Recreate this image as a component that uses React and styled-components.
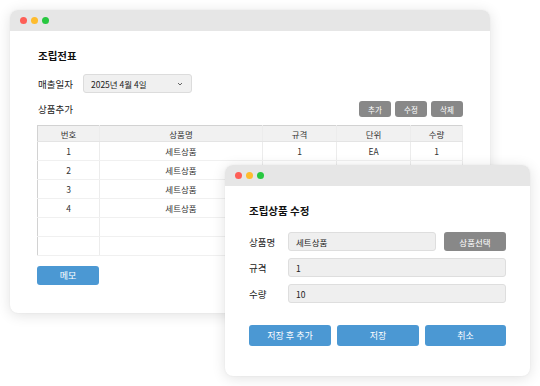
import styled, { createGlobalStyle } from "styled-components";

const GlobalStyle = createGlobalStyle`
  html, body {
    margin: 0;
    padding: 0;
    background: #fff;
  }
  body {
    font-family: "Noto Sans CJK KR", "Noto Sans", sans-serif;
    color: #222;
  }
`;

const Desktop = styled.div`
  position: relative;
  width: 540px;
  height: 386px;
  overflow: hidden;
  background: #fff;
`;

const Window = styled.div`
  position: absolute;
  left: ${(p) => p.x}px;
  top: ${(p) => p.y}px;
  width: ${(p) => p.w}px;
  height: ${(p) => p.h}px;
  background: #fff;
  border-radius: 8px;
  overflow: hidden;
  box-shadow: 0 2px 14px rgba(0, 0, 0, 0.12), 0 0 2px rgba(0, 0, 0, 0.06);
  display: flex;
  flex-direction: column;
`;

const TitleBar = styled.div`
  height: 21px;
  flex: none;
  background: #e6e6e6;
  display: flex;
  align-items: center;
  gap: 4px;
  padding-left: 10px;
`;

const Dot = styled.span`
  width: 7px;
  height: 7px;
  border-radius: 50%;
  background: ${(p) => p.color};
`;

const Body = styled.div`
  padding: ${(p) => p.pad};
  display: flex;
  flex-direction: column;
`;

const Title = styled.h1`
  margin: 0;
  font-size: 10.5px;
  font-weight: 700;
  line-height: 16px;
  color: #111;
`;

const DateRow = styled.div`
  display: flex;
  align-items: center;
  gap: 10px;
  margin-top: 10px;
`;

const Label = styled.span`
  font-size: 9.5px;
  color: #222;
  width: ${(p) => (p.w ? `${p.w}px` : "auto")};
  flex: none;
`;

const Select = styled.div`
  width: 109px;
  height: 19px;
  box-sizing: border-box;
  background: #f0f0f0;
  border: 1px solid #dcdcdc;
  border-radius: 3px;
  display: flex;
  align-items: center;
  justify-content: space-between;
  padding: 0 8px 0 7px;
  font-size: 8.5px;
  color: #222;
`;

const SectionRow = styled.div`
  display: flex;
  align-items: center;
  justify-content: space-between;
  margin-top: 8px;
  width: 425px;
`;

const ButtonGroup = styled.div`
  display: flex;
  gap: 4px;
`;

const GrayButton = styled.button`
  width: ${(p) => p.w || 32}px;
  height: ${(p) => p.h || 16}px;
  border: 0;
  border-radius: 3px;
  background: #888;
  color: #fff;
  font-family: inherit;
  font-size: ${(p) => p.fs || 7.5}px;
  padding: 0;
  flex: none;
`;

const Table = styled.table`
  margin-top: 8px;
  margin-left: -1px;
  width: 426px;
  border-collapse: collapse;
  border: 1px solid #d2d2d2;
  font-size: 8.5px;
  color: #333;
  table-layout: fixed;

  th {
    background: #f1f1f1;
    font-weight: 400;
    height: 15px;
    border-bottom: 1px solid #e4e4e4;
  }
  td {
    height: 18px;
    border-bottom: 1px solid #f0f0f0;
  }
  th, td {
    padding: 0;
    line-height: 10px;
    text-align: center;
    border-right: 1px solid #ececec;
  }
`;

const BlueButton = styled.button`
  width: ${(p) => p.w}px;
  height: ${(p) => p.h}px;
  border: 0;
  border-radius: 3px;
  background: #4b98d3;
  color: #fff;
  font-family: inherit;
  font-size: 9px;
  padding: 0;
  flex: none;
`;

const MemoWrap = styled.div`
  display: flex;
  margin-top: 10px;
  margin-left: -1px;
`;

const FieldList = styled.div`
  display: flex;
  flex-direction: column;
  gap: 7px;
  margin-top: 13px;
`;

const Field = styled.div`
  display: flex;
  align-items: center;
  gap: 8px;
`;

const Input = styled.div`
  flex: 1;
  height: 19px;
  box-sizing: border-box;
  background: #efefef;
  border: 1px solid #dedede;
  border-radius: 3px;
  display: flex;
  align-items: center;
  padding: 0 7px;
  font-size: 8.5px;
  color: #222;
`;

const ActionRow = styled.div`
  display: flex;
  gap: 6px;
  margin-top: 22px;
`;

const rows = [
  ["1", "세트상품", "1", "EA", "1"],
  ["2", "세트상품", "", "", ""],
  ["3", "세트상품", "", "", ""],
  ["4", "세트상품", "", "", ""],
  ["", "", "", "", ""],
  ["", "", "", "", ""],
];

function Dots() {
  return (
    <TitleBar>
      <Dot color="#fe5f57" />
      <Dot color="#febc2e" />
      <Dot color="#28c840" />
    </TitleBar>
  );
}

function Chevron() {
  return (
    <svg width="6" height="4" viewBox="0 0 6 4">
      <path d="M1 1 L3 3 L5 1" fill="none" stroke="#555" strokeWidth="0.9" />
    </svg>
  );
}

export default function App() {
  return (
    <Desktop>
      <GlobalStyle />
      <Window x={10} y={10} w={480} h={303}>
        <Dots />
        <Body pad="17px 0 0 28px">
          <Title>조립전표</Title>
          <DateRow>
            <Label>매출일자</Label>
            <Select>
              <span>2025년 4월 4일</span>
              <Chevron />
            </Select>
          </DateRow>
          <SectionRow>
            <Label>상품추가</Label>
            <ButtonGroup>
              <GrayButton>추가</GrayButton>
              <GrayButton>수정</GrayButton>
              <GrayButton>삭제</GrayButton>
            </ButtonGroup>
          </SectionRow>
          <Table>
            <colgroup>
              <col style={{ width: 62 }} />
              <col style={{ width: 163 }} />
              <col style={{ width: 74 }} />
              <col style={{ width: 74 }} />
              <col />
            </colgroup>
            <thead>
              <tr>
                <th>번호</th>
                <th>상품명</th>
                <th>규격</th>
                <th>단위</th>
                <th>수량</th>
              </tr>
            </thead>
            <tbody>
              {rows.map((r, i) => (
                <tr key={i}>
                  {r.map((c, j) => (
                    <td key={j}>{c}</td>
                  ))}
                </tr>
              ))}
            </tbody>
          </Table>
          <MemoWrap>
            <BlueButton w={62} h={19}>메모</BlueButton>
          </MemoWrap>
        </Body>
      </Window>

      <Window x={225} y={165} w={305} h={211}>
        <Dots />
        <Body pad="17px 24px 0 24px">
          <Title>조립상품 수정</Title>
          <FieldList>
            <Field>
              <Label w={31}>상품명</Label>
              <Input>세트상품</Input>
              <GrayButton w={62} h={19} fs={8.5}>상품선택</GrayButton>
            </Field>
            <Field>
              <Label w={31}>규격</Label>
              <Input>1</Input>
            </Field>
            <Field>
              <Label w={31}>수량</Label>
              <Input>10</Input>
            </Field>
          </FieldList>
          <ActionRow>
            <BlueButton w={82} h={21}>저장 후 추가</BlueButton>
            <BlueButton w={82} h={21}>저장</BlueButton>
            <BlueButton w={81} h={21}>취소</BlueButton>
          </ActionRow>
        </Body>
      </Window>
    </Desktop>
  );
}
